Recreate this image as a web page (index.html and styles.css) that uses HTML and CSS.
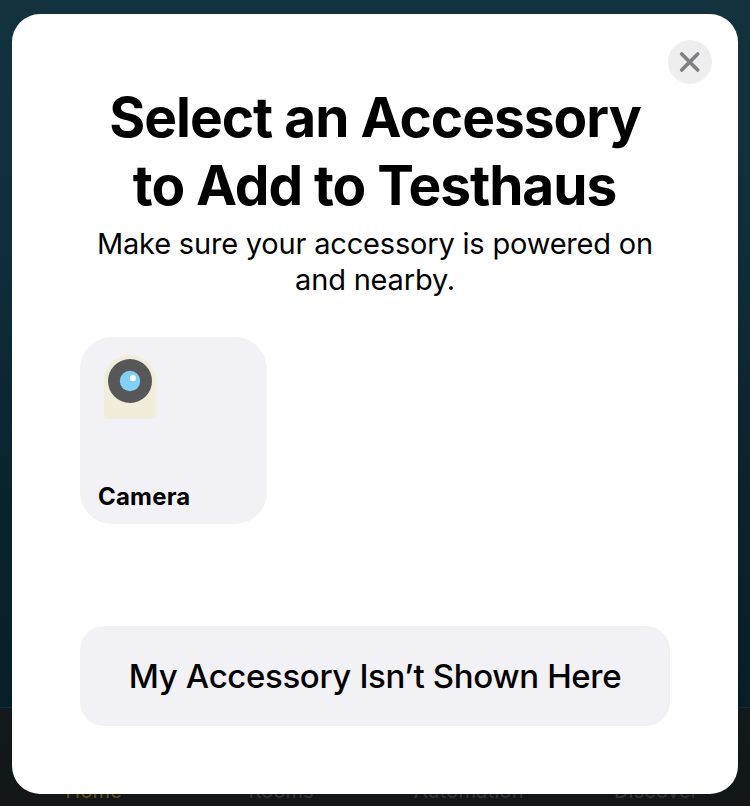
FILE: index.html
```html
<!DOCTYPE html>
<html lang="en">
<head>
<meta charset="utf-8">
<title>Add Accessory</title>
<link rel="stylesheet" href="styles.css">
</head>
<body>
<nav class="tabs"><span class="active">Home</span><span>Rooms</span><span>Automation</span><span>Discover</span></nav>
<main class="sheet">
  <button class="close" aria-label="Close"><svg viewBox="0 0 44 44"><path d="M13.7 14 29.7 30M29.7 14 13.7 30"/></svg></button>
  <h1><span class="line1">Select an Accessory</span><br><span class="line2">to Add to Testhaus</span></h1>
  <p>Make sure your accessory is powered on<br>and nearby.</p>
  <section class="tile">
    <svg class="camera" viewBox="0 0 52 64"><path fill="#f2edda" d="M0 26a26 26 0 0 1 52 0v34q0 4-4 4H4q-4 0-4-4z"/><circle cx="26" cy="26" r="22" fill="#575757"/><circle cx="26" cy="26" r="10.2" fill="#83d0f7"/><circle cx="29" cy="23" r="3.1" fill="#fff"/></svg>
    <span class="label">Camera</span>
  </section>
  <button class="missing"><span>My Accessory Isn’t Shown Here</span></button>
</main>
</body>
</html>
```
FILE: styles.css
```css
* { box-sizing: border-box; }
html { background: #121819; }
body {
  margin: 0;
  height: 806px;
  overflow: hidden;
  padding: 14px 12px 12px;
  background: linear-gradient(#12323e 0, #0f2e39 250px, #0b2630 400px, #061e28 707px, #18282d 707px, #18282d 708px, #121a1c 708px, #121617 806px);
  font-family: Inter, "Liberation Sans", sans-serif;
  color: #000;
}
.tabs {
  position: absolute;
  left: 0;
  top: 779px;
  width: 750px;
  display: grid;
  grid-template-columns: repeat(4, 1fr);
  text-align: center;
  font-size: 20px;
  line-height: 24px;
  letter-spacing: 0.2px;
  color: #303737;
}
.active { color: #684a15; }
.sheet {
  position: relative;
  display: flex;
  flex-direction: column;
  height: 780px;
  padding: 69px 68px 0;
  background: #fff;
  border-radius: 28px;
}
button { border: 0; padding: 0; font: inherit; color: inherit; }
.close {
  position: absolute;
  right: 26px;
  top: 26px;
  width: 44px;
  height: 44px;
  border-radius: 50%;
  background: #eeeeef;
}
.close svg { display: block; fill: none; stroke: #808084; stroke-width: 3.7; stroke-linecap: round; }
h1, p { margin: 0; text-align: center; white-space: nowrap; }
h1 { font-size: 55px; line-height: 68px; font-weight: 700; }
.line1 { letter-spacing: -0.98px; }
.line2 { letter-spacing: -1.06px; margin-right: 1px; }
p { margin-top: 7px; font-size: 29px; line-height: 36px; letter-spacing: -0.19px; }
.tile {
  display: flex;
  flex-direction: column;
  justify-content: space-between;
  width: 187px;
  height: 187px;
  margin-top: 39px;
  padding: 18px 18px 13px 18px;
  border-radius: 32px;
  background: #f2f1f6;
}
.camera { width: 52px; height: 64px; margin-left: 6px; }
.label { font-size: 24px; line-height: 29px; font-weight: 650; letter-spacing: 0.2px; }
.missing {
  width: 590px;
  height: 100px;
  margin-top: 102px;
  border-radius: 24px;
  background: #f2f1f6;
  font-size: 33px;
  font-weight: 500;
  letter-spacing: -0.36px;
}
```
